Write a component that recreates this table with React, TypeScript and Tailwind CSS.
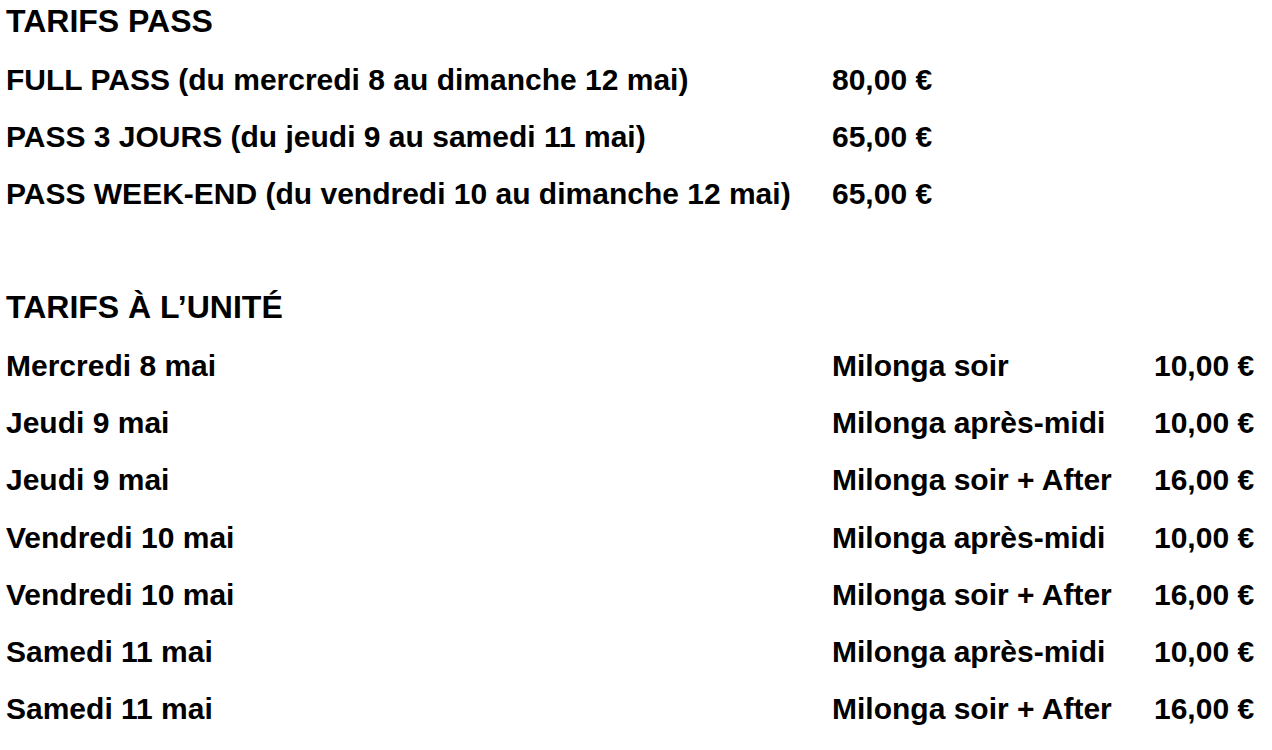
const passes = [
  { label: "FULL PASS (du mercredi 8 au dimanche 12 mai)", price: "80,00 €" },
  { label: "PASS 3 JOURS (du jeudi 9 au samedi 11 mai)", price: "65,00 €" },
  { label: "PASS WEEK-END (du vendredi 10 au dimanche 12 mai)", price: "65,00 €" },
];

const units = [
  { day: "Mercredi 8 mai", event: "Milonga soir", price: "10,00 €" },
  { day: "Jeudi 9 mai", event: "Milonga après-midi", price: "10,00 €" },
  { day: "Jeudi 9 mai", event: "Milonga soir + After", price: "16,00 €" },
  { day: "Vendredi 10 mai", event: "Milonga après-midi", price: "10,00 €" },
  { day: "Vendredi 10 mai", event: "Milonga soir + After", price: "16,00 €" },
  { day: "Samedi 11 mai", event: "Milonga après-midi", price: "10,00 €" },
  { day: "Samedi 11 mai", event: "Milonga soir + After", price: "16,00 €" },
];

export default function App() {
  return (
    <div className="min-h-screen bg-white text-black font-['Liberation_Sans',Arial,sans-serif] font-bold text-[30px] leading-[30px] pl-[6px] pt-[6px]">
      {/* Pass */}
      <h2 className="text-[32px] mb-[29px]">TARIFS PASS</h2>
      <div className="grid grid-cols-[826px_1fr] gap-y-[27.2px]">
        {passes.map((p) => (
          <div key={p.label} className="contents">
            <span className="whitespace-nowrap">{p.label}</span>
            <span className="whitespace-nowrap">{p.price}</span>
          </div>
        ))}
      </div>

      {/* Unit */}
      <h2 className="text-[32px] mt-[82.6px] mb-[29px]">TARIFS À L’UNITÉ</h2>
      <div className="grid grid-cols-[826px_322px_1fr] gap-y-[27.2px]">
        {units.map((u, i) => (
          <div key={i} className="contents">
            <span className="whitespace-nowrap">{u.day}</span>
            <span className="whitespace-nowrap">{u.event}</span>
            <span className="whitespace-nowrap">{u.price}</span>
          </div>
        ))}
      </div>
    </div>
  );
}
